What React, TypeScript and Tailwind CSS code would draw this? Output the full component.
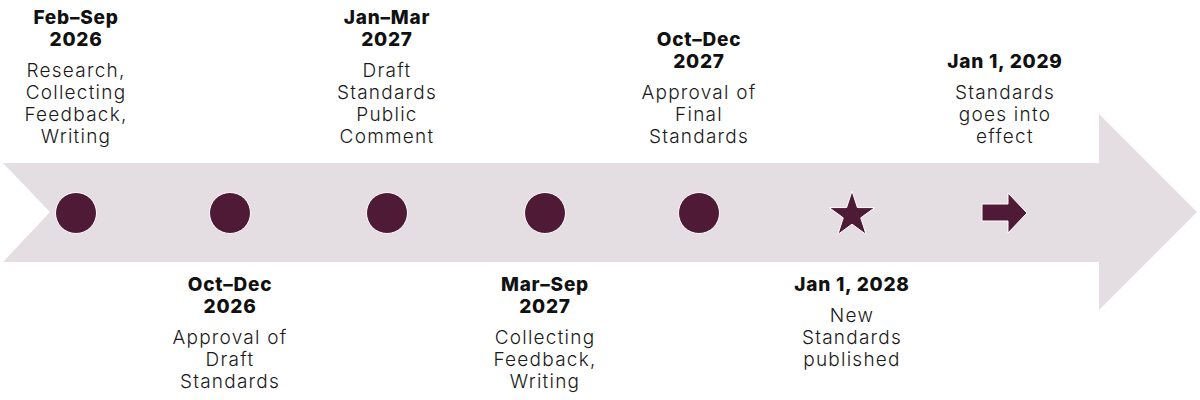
import React from "react";

type Item = {
  head: string[];
  body: string[];
  pos: "top" | "bottom";
  marker: "circle" | "star" | "arrow";
  width: string;
};

const items: Item[] = [
  { head: ["Feb–Sep", "2026"], body: ["Research,", "Collecting", "Feedback,", "Writing"], pos: "top", marker: "circle", width: "w-[152px]" },
  { head: ["Oct–Dec", "2026"], body: ["Approval of", "Draft", "Standards"], pos: "bottom", marker: "circle", width: "w-[156px]" },
  { head: ["Jan–Mar", "2027"], body: ["Draft", "Standards", "Public", "Comment"], pos: "top", marker: "circle", width: "w-[158px]" },
  { head: ["Mar–Sep", "2027"], body: ["Collecting", "Feedback,", "Writing"], pos: "bottom", marker: "circle", width: "w-[158px]" },
  { head: ["Oct–Dec", "2027"], body: ["Approval of", "Final", "Standards"], pos: "top", marker: "circle", width: "w-[150px]" },
  { head: ["Jan 1, 2028"], body: ["New", "Standards", "published"], pos: "bottom", marker: "star", width: "w-[156px]" },
  { head: ["Jan 1, 2029"], body: ["Standards", "goes into", "effect"], pos: "top", marker: "arrow", width: "w-[150px]" },
];

function Label({ item }: { item: Item }) {
  return (
    <div className="text-center text-[19px] leading-[22px] whitespace-nowrap">
      <div className="font-extrabold text-[#111111] tracking-[0.04em]">
        {item.head.map((l, i) => (
          <div key={i}>{l}</div>
        ))}
      </div>
      <div className="mt-[9px] font-light text-[#1a1a1a] tracking-[0.065em]">
        {item.body.map((l, i) => (
          <div key={i}>{l}</div>
        ))}
      </div>
    </div>
  );
}

function Marker({ kind }: { kind: Item["marker"] }) {
  if (kind === "circle") {
    return <div className="w-[42px] h-[42px] rounded-full bg-[#4e1a36] border-[1.5px] border-white" />;
  }
  if (kind === "star") {
    const R = 24;
    const r = R * 0.382;
    const pts: string[] = [];
    for (let i = 0; i < 10; i++) {
      const rad = i % 2 === 0 ? R : r;
      const a = (-90 + i * 36) * (Math.PI / 180);
      pts.push(`${(25 + rad * Math.cos(a)).toFixed(2)},${(26 + rad * Math.sin(a)).toFixed(2)}`);
    }
    return (
      <svg width="50" height="48" viewBox="0 0 50 48">
        <polygon points={pts.join(" ")} fill="#4e1a36" stroke="#ffffff" strokeWidth="1" strokeLinejoin="miter" />
      </svg>
    );
  }
  return (
    <svg width="48" height="42" viewBox="0 0 48 42">
      <polygon
        points="1,12 27,12 27,1 46,21 27,41 27,29 1,29"
        fill="#4e1a36"
        stroke="#ffffff"
        strokeWidth="1"
      />
    </svg>
  );
}

export default function App() {
  return (
    <div className="relative w-[1200px] h-[400px] bg-white font-['Inter',sans-serif] overflow-hidden">
      <svg className="absolute inset-0" width="1200" height="400" viewBox="0 0 1200 400">
        <polygon
          points="3,163 1099,163 1099,114 1197,212 1099,310 1099,262 3,262 50,212"
          fill="#e4dde2"
        />
      </svg>
      <div className="relative flex">
        {items.map((item, i) => (
          <div key={i} className={`${item.width} flex flex-col items-center`}>
            <div className="h-[163px] w-full flex items-end justify-center pb-[15px]">
              {item.pos === "top" && <Label item={item} />}
            </div>
            <div className="h-[99px] w-full flex items-center justify-center pt-[1px]">
              <Marker kind={item.marker} />
            </div>
            <div className="h-[138px] w-full flex justify-center pt-[12px]">
              {item.pos === "bottom" && <Label item={item} />}
            </div>
          </div>
        ))}
      </div>
    </div>
  );
}
